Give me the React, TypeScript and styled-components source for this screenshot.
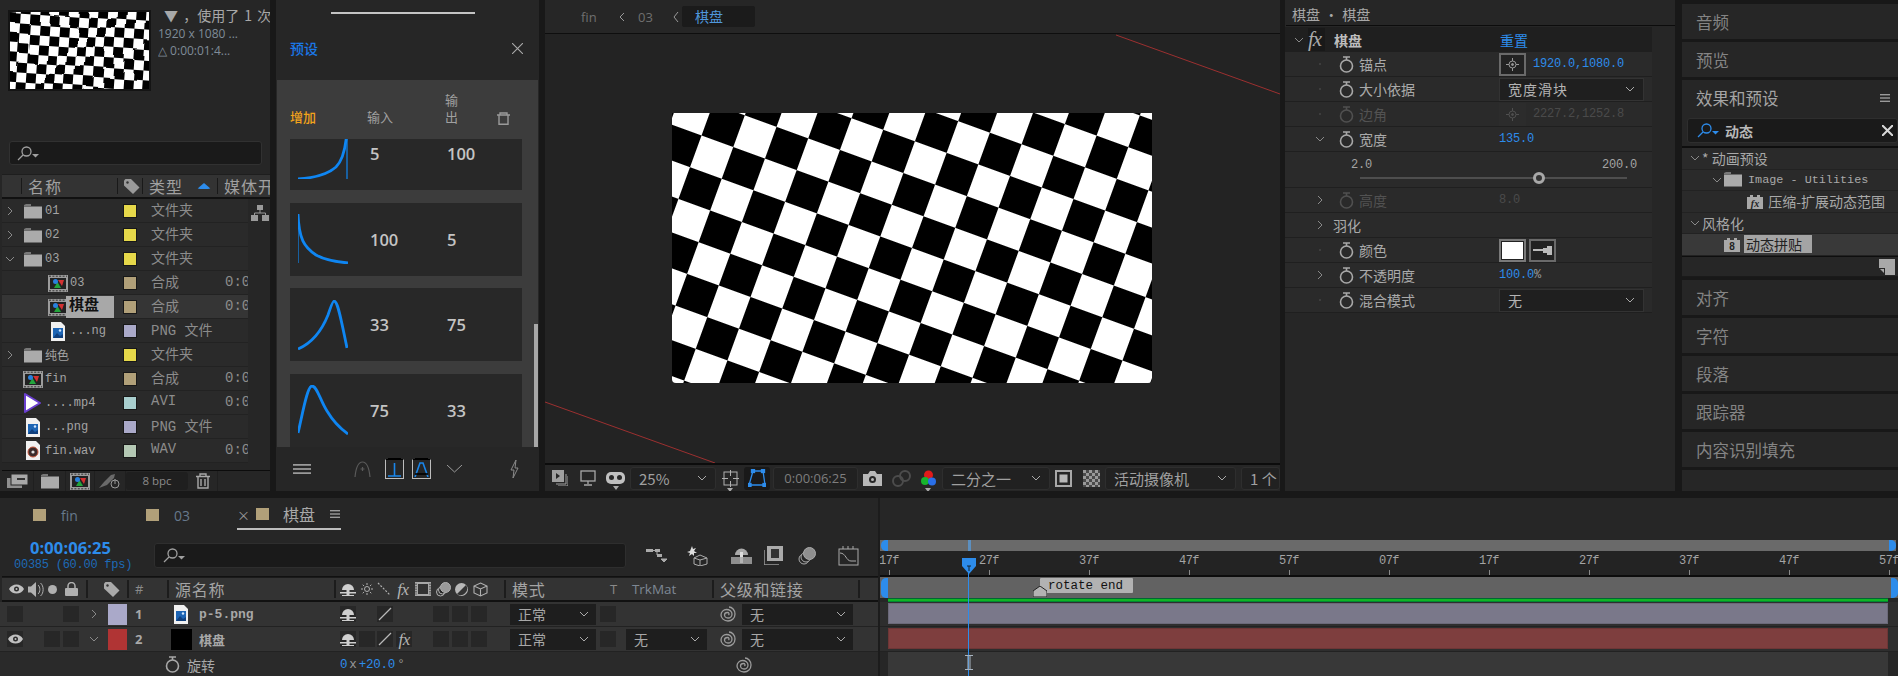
import React from 'react';
import styled, { createGlobalStyle } from 'styled-components';

const CJK = '"Noto Sans CJK SC", "Noto Sans", sans-serif';
const MONO = '"Liberation Mono", "Noto Sans CJK SC", monospace';
const BLUE = '#2d8ceb';

const Global = createGlobalStyle`
  html, body { margin: 0; padding: 0; background: #181818; overflow: hidden; }
  #root { width: 1898px; height: 676px; }
  * { box-sizing: border-box; }
`;

const Page = styled.div`
  width: 1898px; height: 676px; display: flex; flex-direction: column; gap: 7px;
  background: #181818; font-family: ${CJK}; color: #a0a0a0; overflow: hidden;
`;
const TopArea = styled.div`display: flex; height: 491px;`;
const Panel = styled.section<{ $w: number; $ml?: number }>`
  width: ${p => p.$w}px; margin-left: ${p => p.$ml ?? 0}px; flex: none; background: #262626;
  display: flex; flex-direction: column; overflow: hidden; position: relative;
`;

/* ---------- icons ---------- */
const Chevron = ({ dir = 'right', c = '#8a8a8a', s = 10 }: { dir?: 'right' | 'down' | 'left'; c?: string; s?: number }) => (
  <svg width={s} height={s} viewBox="0 0 10 10" fill="none" stroke={c} strokeWidth="1">
    {dir === 'right' && <path d="M3 1l4 4-4 4" />}
    {dir === 'left' && <path d="M7 1L3 5l4 4" />}
    {dir === 'down' && <path d="M1 3l4 4 4-4" />}
  </svg>
);
const Folder = () => (
  <svg width="18" height="15" viewBox="0 0 18 15"><path d="M0 2h7V0H2L0 1z" fill="#777" /><rect y="2.5" width="18" height="12" fill="#ababab" /></svg>
);
const CompIcon = () => (
  <svg width="20" height="17" viewBox="0 0 20 17">
    <rect width="20" height="17" fill="#9c9c9c" />
    <path d="M1 1.2h18M1 15.8h18" stroke="#333" strokeWidth="1" strokeDasharray="2 1.4" />
    <rect x="2" y="3" width="16" height="11" fill="#222" />
    <path d="M10 5h6l-2 6z" fill="#d43131" />
    <path d="M6 13l3.5-6 3.5 6z" fill="#23a53c" />
    <circle cx="7.5" cy="6.5" r="2.5" fill="#2a80dc" />
  </svg>
);
const PngIcon = () => (
  <svg width="14" height="19" viewBox="0 0 14 19">
    <path d="M0 0h10l4 4v15H0z" fill="#f0f0f0" />
    <rect x="2" y="6" width="10" height="10" fill="#1c64b4" />
    <path d="M2 16l4-5 3 3 3-2v4z" fill="#0f3f7d" />
    <circle cx="9" cy="8.5" r="1.2" fill="#cfe6ff" />
  </svg>
);
const WavIcon = () => (
  <svg width="14" height="19" viewBox="0 0 14 19">
    <path d="M0 0h10l4 4v15H0z" fill="#f0f0f0" />
    <circle cx="7" cy="11" r="5" fill="#3a2a2a" stroke="#c5563c" />
    <circle cx="7" cy="11" r="1.6" fill="#ddd" />
  </svg>
);
const AviIcon = () => (
  <svg width="17" height="20" viewBox="0 0 17 20">
    <path d="M1 1l15 9-15 9z" fill="#fff" stroke="#6a3fd0" strokeWidth="2" strokeLinejoin="round" />
  </svg>
);
const Network = () => (
  <svg width="18" height="16" viewBox="0 0 18 16" fill="#9a9a9a">
    <rect x="6" width="6" height="5" /><rect y="10" width="7" height="6" /><rect x="11" y="10" width="7" height="6" />
    <path d="M9 5v3M3.5 10V8h11v2" stroke="#9a9a9a" fill="none" />
  </svg>
);
const Tag = ({ c = '#9a9a9a' }: { c?: string }) => (
  <svg width="16" height="15" viewBox="0 0 16 15"><path d="M0 1.5L1.5 0H7l8.5 8.5L9 15 0 6.5z" fill={c} /><circle cx="3.5" cy="3.5" r="1.2" fill="#333" /></svg>
);
const SearchIcon = ({ c = '#a0a0a0' }: { c?: string }) => (
  <svg width="22" height="15" viewBox="0 0 22 15" fill="none" stroke={c} strokeWidth="1.3">
    <circle cx="9.5" cy="5.5" r="4.5" /><path d="M6 9l-5 5" /><path d="M15 8h7l-3.500 3.500z" fill={c} stroke="none" />
  </svg>
);
const Trash = ({ c = '#a0a0a0' }: { c?: string }) => (
  <svg width="14" height="16" viewBox="0 0 14 16" fill="none" stroke={c} strokeWidth="1.4">
    <path d="M0 3.500h14M4 3V1h6v2M2 4v11h10V4M5 6v7M9 6v7" />
  </svg>
);
const BinOutline = () => (
  <svg width="13" height="13" viewBox="0 0 13 13" fill="none" stroke="#9a9a9a" strokeWidth="1.400">
    <path d="M0 3h13M3 3V1h7v2M2 3v9.300h9V3" />
  </svg>
);
const Watch = ({ c = '#a8a8a8' }: { c?: string }) => (
  <svg width="15" height="17" viewBox="0 0 15 17" fill="none" stroke={c} strokeWidth="1.6">
    <circle cx="7.500" cy="10" r="6" /><path d="M4 1h7M7.500 1v3" />
  </svg>
);
const Spiral = () => (
  <svg width="16" height="16" viewBox="0 0 16 16" fill="none" stroke="#9c9c9c" strokeWidth="1.300">
    <path d="M9 1C12 1 15 4 15 8s-3 7-7 7-7-3-7-6 2.500-5.500 5.500-5.500S12 5.500 12 8s-2 4-4 4-3.500-1.500-3.500-3S6 6.500 7.500 6.500 9.500 8 8.500 9" />
  </svg>
);
const Shy = () => (
  <svg width="16" height="15" viewBox="0 0 16 15" fill="#cfcfcf">
    <path d="M2 8a6 6 0 0 1 12 0z" /><rect x="6.500" y="6" width="3" height="8" /><rect y="10" width="16" height="1.500" />
    <rect x="2" y="13" width="12" height="1" />
  </svg>
);
const Slash = () => (
  <svg width="14" height="14" viewBox="0 0 14 14" stroke="#b8b8b8" strokeWidth="1.300"><path d="M1 13L13 1" /></svg>
);
const Eye = ({ c = '#c0c0c0' }: { c?: string }) => (
  <svg width="15" height="10" viewBox="0 0 15 10"><path d="M0 5c3-6 12-6 15 0-3 6-12 6-15 0z" fill={c} /><circle cx="7.500" cy="5" r="2.500" fill="#2d2d2d" /><circle cx="7.500" cy="5" r="1" fill={c} /></svg>
);
const Speaker = () => (
  <svg width="16" height="15" viewBox="0 0 16 15" fill="#b0b0b0">
    <path d="M0 4.500h3L8 0v15l-5-4.500H0z" /><path d="M10 3c2.500 2 2.500 7 0 9M12.500 1c3.500 3 3.500 10 0 13" fill="none" stroke="#b0b0b0" />
  </svg>
);
const Lock = () => (
  <svg width="13" height="14" viewBox="0 0 13 14" fill="#b0b0b0">
    <rect y="6" width="13" height="8" rx="1" /><path d="M3 6V4a3.500 3.500 0 0 1 7 0v2" fill="none" stroke="#b0b0b0" strokeWidth="1.500" />
  </svg>
);
const Dot = () => <svg width="9" height="9" viewBox="0 0 9 9"><circle cx="4.500" cy="4.500" r="4.500" fill="#b0b0b0" /></svg>;
const Sun = () => (
  <svg width="12" height="12" viewBox="0 0 12 12" stroke="#b0b0b0" fill="none">
    <circle cx="6" cy="6" r="2.500" /><path d="M6 0v2M6 10v2M0 6h2M10 6h2M1.700 1.700l1.400 1.400M8.900 8.900l1.400 1.400M1.700 10.300l1.400-1.400M8.900 3.100l1.400-1.400" />
  </svg>
);
const Dots = () => (
  <svg width="14" height="14" viewBox="0 0 14 14" stroke="#b0b0b0" strokeWidth="1.200" strokeDasharray="2 1.500"><path d="M1 1l12 12" /></svg>
);
const Film = ({ w = 16, h = 14 }: { w?: number; h?: number }) => (
  <svg width={w} height={h} viewBox="0 0 16 14">
    <rect width="16" height="14" fill="#a8a8a8" /><rect x="3" y="2" width="10" height="10" fill="#333" />
    <path d="M1 1.500v11M15 1.500v11" stroke="#333" strokeWidth="1" strokeDasharray="1.500 1" />
  </svg>
);
const Motion = () => (
  <svg width="15" height="15" viewBox="0 0 15 15" fill="none" stroke="#b0b0b0">
    <circle cx="4.500" cy="10" r="4" /><circle cx="6.500" cy="8" r="4" fill="#262626" /><circle cx="9.500" cy="5.500" r="5" fill="#9a9a9a" />
  </svg>
);
const HalfCircle = () => (
  <svg width="13" height="13" viewBox="0 0 13 13"><circle cx="6.500" cy="6.500" r="6.500" fill="#b8b8b8" /><path d="M11 2L2 11A6.500 6.500 0 0 0 11 2z" fill="#333" /></svg>
);
const Cube = ({ s = 15 }: { s?: number }) => (
  <svg width={s} height={s} viewBox="0 0 15 15" fill="none" stroke="#b0b0b0" strokeWidth="1.100">
    <path d="M7.500 1L14 4v7l-6.500 3L1 11V4zM1 4l6.500 3L14 4M7.500 7v7" />
  </svg>
);
const Burger = ({ w = 10, h = 8, c = '#9a9a9a' }: { w?: number; h?: number; c?: string }) => (
  <svg width={w} height={h} viewBox="0 0 10 8" preserveAspectRatio="none" fill={c}>
    <rect width="10" height="1.400" /><rect y="3.300" width="10" height="1.400" /><rect y="6.600" width="10" height="1.400" />
  </svg>
);

const ThumbChecker = () => (
  <svg width="139" height="77" viewBox="0 0 139 77">
    <defs>
      <pattern id="th" width="19.6" height="19.6" patternUnits="userSpaceOnUse" patternTransform="rotate(4)">
        <rect width="19.6" height="19.6" fill="#fff" />
        <rect width="9.800" height="9.800" fill="#000" />
        <rect x="9.800" y="9.800" width="9.800" height="9.800" fill="#000" />
      </pattern>
      <filter id="warp" x="-10%" y="-10%" width="120%" height="120%">
        <feTurbulence type="fractalNoise" baseFrequency="0.018" numOctaves="1" seed="4" />
        <feDisplacementMap in="SourceGraphic" scale="10" />
      </filter>
    </defs>
    <rect x="-10" y="-10" width="160" height="100" fill="url(#th)" filter="url(#warp)" />
  </svg>
);

/* ---------- project panel ---------- */
const InfoRow = styled.div`height: 134px; display: flex; padding: 10px 0 0 8px; gap: 7px; flex: none;`;
const Thumb = styled.div`width: 143px; height: 81px; border: 2px solid #141414; background: #fff; overflow: hidden; flex: none; line-height: 0;`;
const InfoText = styled.div`display: flex; flex-direction: column; white-space: nowrap; overflow: hidden; margin-top: -4px;`;
const InfoTitle = styled.div`font-size: 14px; height: 19px; line-height: 19px; color: #a8a8a8; margin-left: 6px; word-spacing: 2px;`;
const InfoLine = styled.div`font: 12px/17px "Open Sans", sans-serif; color: #7f8c98;`;
const SearchBox = styled.div`
  height: 24px; margin: 7px 8px 0 9px; background: #1a1a1a; border: 1px solid #313131; border-radius: 3px;
  display: flex; align-items: center; padding-left: 7px; flex: none;
`;
const ListHeader = styled.div`
  height: 25px; margin: 9px 0 0 2px; display: flex; flex: none; background: #333; border-top: 1px solid #1e1e1e; border-bottom: 2px solid #111; padding-left: 19px;
`;
const HeadCol = styled.div<{ $w: number }>`
  width: ${p => p.$w}px; flex: none; display: flex; align-items: center; gap: 14px; padding-left: 6px; white-space: nowrap;
  border-left: 1px solid #191919; margin: 3px 0; font-size: 16px; letter-spacing: 1px; color: #a0a0a0;
`;
const SortArrow = styled.span`width: 0; height: 0; border: 7px solid transparent; border-top: 0; border-bottom: 6px solid #2d8ceb; border-radius: 3px;`;
const ListBody = styled.div`display: flex; flex: 1; padding-left: 2px; overflow: hidden;`;
const Rows = styled.div`width: 246px; flex: none;`;
const SideCol = styled.div`flex: 1; padding: 3px 0 0 3px;`;
const Row = styled.div<{ $on?: boolean }>`
  height: 24px; display: grid; grid-template-columns: 121px 28px 74px 1fr; align-items: center; white-space: nowrap;
  background: ${p => (p.$on ? '#353535' : '#2a2a2a')}; border-bottom: 1px solid #222;
`;
const NameCell = styled.div<{ $indent: number }>`display: flex; align-items: center; padding-left: ${p => p.$indent}px; height: 100%; overflow: hidden;`;
const TwistSlot = styled.span`width: 19px; flex: none; display: flex; padding-left: 3px;`;
const IconSlot = styled.span`width: 23px; flex: none; display: flex; justify-content: center;`;
const FileName = styled.span<{ $on?: boolean }>`
  font-family: ${MONO}; margin-left: ${p => (p.$on ? -3 : 1)}px; color: ${p => (p.$on ? '#111' : '#a4a4a4')}; font-weight: ${p => (p.$on ? 700 : 400)};
  background: ${p => (p.$on ? '#a8a8a8' : 'none')}; padding: ${p => (p.$on ? '0 15px 0 3px' : '0')}; font-size: ${p => (p.$on ? 15 : 12)}px; line-height: ${p => (p.$on ? '22px' : 'normal')};
`;
const Swatch = styled.span<{ $c: string }>`display: block; width: 14px; height: 14px; background: ${p => p.$c}; border: 1px solid #181818;`;
const TypeCell = styled.span`font-size: 14px; color: #8c8c8c; font-family: ${MONO}; padding-bottom: 4px;`;
const DurCell = styled.span`font-family: ${MONO}; font-size: 14px; color: #8c8c8c; overflow: hidden; padding-bottom: 2px;`;
const Foot = styled.div`height: 21px; border-top: 1px solid #0c0c0c; display: flex; align-items: center; margin-left: 2px; flex: none;`;
const FootSlot = styled.span<{ $w: number }>`width: ${p => p.$w}px; flex: none; display: flex; justify-content: center; align-items: center; border-right: 1px solid #1f1f1f; height: 100%;`;
const BpcBox = styled.span`width: 62px; height: 18px; background: #1f1f1f; border-radius: 3px; font: 11.500px/18px "Open Sans", sans-serif; color: #8a8a8a; text-align: center; flex: none;`;

type PR = { ind: number; tw?: 'right' | 'down'; icon: React.ReactNode; name: string; tag: string; type: string; dur?: boolean; on?: boolean };
const TAN = '#b1a079', YEL = '#e6d84a', LAV = '#aaa9c9';
const projectRows: PR[] = [
  { ind: 0, tw: 'right', icon: <Folder />, name: '01', tag: YEL, type: '文件夹' },
  { ind: 0, tw: 'right', icon: <Folder />, name: '02', tag: YEL, type: '文件夹' },
  { ind: 0, tw: 'down', icon: <Folder />, name: '03', tag: YEL, type: '文件夹' },
  { ind: 25, icon: <CompIcon />, name: '03', tag: TAN, type: '合成', dur: true },
  { ind: 25, icon: <CompIcon />, name: '棋盘', tag: TAN, type: '合成', dur: true, on: true },
  { ind: 25, icon: <PngIcon />, name: '...ng', tag: LAV, type: 'PNG 文件' },
  { ind: 0, tw: 'right', icon: <Folder />, name: '纯色', tag: YEL, type: '文件夹' },
  { ind: 0, icon: <CompIcon />, name: 'fin', tag: TAN, type: '合成', dur: true },
  { ind: 0, icon: <AviIcon />, name: '....mp4', tag: '#a9cfcf', type: 'AVI', dur: true },
  { ind: 0, icon: <PngIcon />, name: '...png', tag: LAV, type: 'PNG 文件' },
  { ind: 0, icon: <WavIcon />, name: 'fin.wav', tag: '#b4c8b4', type: 'WAV', dur: true },
];

const Project = () => (
  <Panel $w={270}>
    <InfoRow>
      <Thumb><ThumbChecker /></Thumb>
      <InfoText>
        <InfoTitle>▼ ，使用了 1 次</InfoTitle>
        <InfoLine>1920 x 1080 ...</InfoLine>
        <InfoLine>△ 0:00:01:4...</InfoLine>
      </InfoText>
    </InfoRow>
    <SearchBox><SearchIcon /></SearchBox>
    <ListHeader>
      <HeadCol $w={96}>名称</HeadCol>
      <HeadCol $w={25}><Tag /></HeadCol>
      <HeadCol $w={75}>类型<SortArrow /></HeadCol>
      <HeadCol $w={50}>媒体开</HeadCol>
    </ListHeader>
    <ListBody>
      <Rows>
        {projectRows.map((r, i) => (
          <Row key={i} $on={r.on}>
            <NameCell $indent={r.ind}>
              <TwistSlot>{r.tw && <Chevron dir={r.tw} />}</TwistSlot>
              <IconSlot>{r.icon}</IconSlot>
              <FileName $on={r.on}>{r.name}</FileName>
            </NameCell>
            <Swatch $c={r.tag} />
            <TypeCell>{r.type}</TypeCell>
            {r.dur ? <DurCell>0:00</DurCell> : <span />}
          </Row>
        ))}
      </Rows>
      <SideCol><Network /></SideCol>
    </ListBody>
    <Foot>
      <FootSlot $w={32}><svg width="21" height="14" viewBox="0 0 21 14"><rect x="0" y="4" width="15" height="10" fill="#8f8f8f" /><rect x="4" y="0" width="17" height="11" fill="#a8a8a8" stroke="#262626" /><rect x="10" y="4" width="8" height="2" fill="#333" /></svg></FootSlot>
      <FootSlot $w={32}><Folder /></FootSlot>
      <FootSlot $w={29}><CompIcon /></FootSlot>
      <FootSlot $w={31}><svg width="22" height="15" viewBox="0 0 22 15" fill="#6a6a6a"><path d="M0 14l5-6 7-7 4-1-1 4-7 7z" /><circle cx="16" cy="10" r="4" fill="none" stroke="#9a9a9a" /><path d="M16 5v5" stroke="#9a9a9a" /></svg></FootSlot>
      <BpcBox>8 bpc</BpcBox>
      <FootSlot $w={30}><Trash c="#a8a8a8" /></FootSlot>
    </Foot>
  </Panel>
);

/* ---------- preset panel ---------- */
const TopBar = styled.div`height: 80px; flex: none; padding-top: 12px; display: flex; flex-direction: column; position: relative;`;
const TopRule = styled.div`width: 144px; height: 2px; background: #c4c4c4; margin-left: 55px;`;
const TitleLine = styled.div`display: flex; justify-content: space-between; align-items: center; margin: 24px 16px 0 14px;`;
const PresetTitle = styled.span`color: #1a78e8; font-size: 14px; font-weight: 500;`;
const GreySection = styled.div`height: 367px; margin: 0 1px; background: #3c3c3c; display: flex; flex-direction: column; position: relative; flex: none;`;
const CurveHead = styled.div`height: 59px; display: grid; grid-template-columns: 77px 78px 52px auto; padding: 0 0 14px 13px; align-items: end; font-size: 13px; color: #a0a0a0; flex: none; line-height: 17px;`;
const Orange = styled.span`color: #f2a31b; font-weight: 500;`;
const Narrow = styled.span`width: 14px; display: block;`;
const CurveClip = styled.div`flex: 1; overflow: hidden; padding: 0 16px 0 13px;`;
const CurveList = styled.div`margin-top: -22px; display: flex; flex-direction: column; gap: 12.500px;`;
const CurveRow = styled.div`
  height: 73px; flex: none; background: #282828; display: grid; grid-template-columns: 72px 77px 1fr; align-items: center; padding-left: 8px;
  font: 600 16.500px "Open Sans", sans-serif; color: #c4c4c4;
`;
const ScrollThumb = styled.div`position: absolute; right: 0; bottom: 0; width: 4px; height: 123px; background: #a8a8a8;`;
const PresetFoot = styled.div`flex: 1; display: flex; align-items: center; padding: 0 0 0 17px;`;
const ModeBtn = styled.span<{ $ml: number }>`
  width: 19px; height: 20px; margin-left: ${p => p.$ml}px; border: 1px solid #bdbdbd; border-top: 1px solid #000; box-shadow: 0 -4px 0 -3px #000;
  display: flex; align-items: center; justify-content: center; flex: none;
`;
const FootIcon = styled.span<{ $ml: number }>`margin-left: ${p => p.$ml}px; display: flex; flex: none;`;

const curves = [
  { a: '5', b: '100', d: 'M0 50C15 49 29 46 38 38 44 32 48 20 49 0', thin: 'M49 0V50' },
  { a: '100', b: '5', d: 'M0 0C1 25 6 33 18 41 27 46 40 48 50 49', thin: 'M0 0V49' },
  { a: '33', b: '75', d: 'M0 49C14 43 24 30 30 15 33 6 35 1 36 1 39 1 41 8 49 48' },
  { a: '75', b: '33', d: 'M0 48C4 32 9 1 14 1 19 1 22 15 29 26 35 36 43 44 50 49' },
];

const Preset = () => (
  <Panel $w={263} $ml={6}>
    <TopBar>
      <TopRule />
      <TitleLine>
        <PresetTitle>预设</PresetTitle>
        <svg width="11" height="11" viewBox="0 0 11 11" stroke="#aaa" strokeWidth="1.100"><path d="M0 0l11 11M11 0L0 11" /></svg>
      </TitleLine>
    </TopBar>
    <GreySection>
      <CurveHead>
        <Orange>增加</Orange>
        <span>输入</span>
        <Narrow>输出</Narrow>
        <BinOutline />
      </CurveHead>
      <CurveClip>
        <CurveList>
          {curves.map((c, i) => (
            <CurveRow key={i}>
              <svg width="50" height="50" viewBox="0 0 50 50" fill="none" stroke="#0f86f2" strokeWidth="2.800">
                <path d={c.d} />
                {c.thin && <path d={c.thin} strokeWidth="1.200" />}
              </svg>
              <span>{c.a}</span>
              <span>{c.b}</span>
            </CurveRow>
          ))}
        </CurveList>
      </CurveClip>
      <ScrollThumb />
    </GreySection>
    <PresetFoot>
      <Burger w={18} h={10} />
      <FootIcon $ml={43}><svg width="17" height="16" viewBox="0 0 17 16" fill="none" stroke="#5a5a5a" strokeWidth="1.200"><path d="M1 16C2 6 5 1 8.500 1S15 6 16 16M8.500 6v4M6.500 8h4" /></svg></FootIcon>
      <ModeBtn $ml={14}><svg width="15" height="15" viewBox="0 0 15 15" stroke="#1a86ea" strokeWidth="1.600" fill="none"><path d="M7.500 1v13M1 14h13" /></svg></ModeBtn>
      <ModeBtn $ml={8}><svg width="15" height="15" viewBox="0 0 15 15" stroke="#1a86ea" strokeWidth="1.600" fill="none"><path d="M1 15L6 1h3l5 14" /><path d="M1 12h13" stroke="#000" /></svg></ModeBtn>
      <FootIcon $ml={16}><svg width="15" height="8" viewBox="0 0 15 8" stroke="#9a9a9a" fill="none"><path d="M0 0l7.500 7L15 0" /></svg></FootIcon>
      <FootIcon $ml={48}><svg width="9" height="18" viewBox="0 0 9 18" stroke="#8a8a8a" fill="none"><path d="M6 0L1 10h3L3 18l5-10H5z" /></svg></FootIcon>
    </PresetFoot>
  </Panel>
);

/* ---------- viewer ---------- */
const Crumbs = styled.div`height: 34px; flex: none; display: flex; align-items: center; padding-left: 36px; border-bottom: 1px solid #0e0e0e; font-size: 13px; color: #6f6f6f;`;
const CrumbText = styled.span<{ $w: number }>`width: ${p => p.$w}px; flex: none; font-family: "Open Sans", sans-serif;`;
const CrumbSep = styled.span<{ $w: number }>`width: ${p => p.$w}px; flex: none; display: flex;`;
const CrumbTab = styled.span`width: 73px; height: 21px; background: #1b1b1b; color: #4f97dc; padding-left: 13px; font-size: 14px; line-height: 21px; border-radius: 2px; flex: none;`;
const Stage = styled.div`flex: 1; position: relative; display: flex; align-items: center; justify-content: center; background: #232323; padding: 0 1px 1px 0;`;
const Guides = styled.svg`position: absolute; inset: 0;`;
const Frame = styled.div`width: 480px; height: 270px; position: relative; border-radius: 0 0 4px 4px; overflow: hidden; line-height: 0;`;
const Toolbar = styled.div`height: 28px; flex: none; border-top: 2px solid #0c0c0c; display: flex; align-items: center; overflow: hidden;`;
const Slot = styled.span<{ $w: number }>`width: ${p => p.$w}px; flex: none; display: flex; justify-content: center; align-items: center; position: relative;`;
const Drop = styled.span<{ $w: number; $ml?: number }>`
  width: ${p => p.$w}px; margin-left: ${p => p.$ml ?? 0}px; height: 23px; flex: none; background: #212121; border: 1px solid #2e2e2e; border-radius: 3px;
  display: flex; align-items: center; justify-content: space-between; padding: 0 8px; font-size: 15px; color: #a0a0a0; white-space: nowrap;
`;
const ActiveBtn = styled.span`width: 26px; height: 23px; flex: none; background: #191919; border-radius: 3px; display: flex; align-items: center; justify-content: center;`;
const TimeBox = styled.span`width: 85px; height: 23px; margin-left: 3px; flex: none; background: #212121; border: 1px solid #2e2e2e; border-radius: 3px; text-align: center; font: 13px/21px "Open Sans", sans-serif; color: #7e7e7e;`;
const Mini = styled.span`position: absolute; bottom: -5px; left: 50%; margin-left: -3px; width: 0; height: 0; border: 3px solid transparent; border-bottom: 0; border-top: 4px solid #aaa;`;

const BigChecker = () => (
  <svg width="480" height="270" viewBox="0 0 480 270">
    <defs>
      <pattern id="chk" x="240" y="135" width="67.5" height="67.5" patternUnits="userSpaceOnUse" patternTransform="rotate(20 240 135)">
        <rect width="67.5" height="67.5" fill="#000" />
        <rect width="33.75" height="33.75" fill="#fff" />
        <rect x="33.75" y="33.75" width="33.75" height="33.75" fill="#fff" />
      </pattern>
    </defs>
    <rect width="480" height="270" fill="url(#chk)" />
  </svg>
);

const Viewer = () => (
  <Panel $w={735} $ml={6}>
    <Crumbs>
      <CrumbText $w={36}>fin</CrumbText>
      <CrumbSep $w={21}><Chevron dir="left" c="#999" /></CrumbSep>
      <CrumbText $w={35}>03</CrumbText>
      <CrumbSep $w={9}><svg width="6" height="10" viewBox="0 0 6 10" fill="none" stroke="#999"><path d="M5 0L1 5l4 5" /></svg></CrumbSep>
      <CrumbTab>棋盘</CrumbTab>
    </Crumbs>
    <Stage>
      <Guides width="735" height="429" viewBox="0 0 735 429" fill="none" stroke="#9c3030">
        <path d="M571 1L735 60M0 368L170 429" />
      </Guides>
      <Frame><BigChecker /></Frame>
    </Stage>
    <Toolbar>
      <Slot $w={29}><svg width="16" height="16" viewBox="0 0 16 16" fill="none" stroke="#a0a0a0"><rect x="0.500" y="0.500" width="11" height="11" fill="#a0a0a0" /><path d="M14 4v10H4M16 6v10H6" /><path d="M4 3l4 3-4 3z" fill="#262626" stroke="none" /></svg></Slot>
      <Slot $w={28}><svg width="16" height="16" viewBox="0 0 16 16" fill="none" stroke="#a8a8a8" strokeWidth="1.300"><rect x="1" y="1" width="14" height="10" /><path d="M8 11v3M4 15h8" /></svg></Slot>
      <Slot $w={27}><svg width="19" height="13" viewBox="0 0 19 13" fill="#c0c0c0"><rect width="19" height="12" rx="5" /><circle cx="5.500" cy="5.500" r="2.500" fill="#262626" /><circle cx="13.500" cy="5.500" r="2.500" fill="#262626" /></svg><Mini /></Slot>
      <Drop $w={86} $ml={1}><span>25%</span><Chevron dir="down" c="#aaa" /></Drop>
      <Slot $w={28}><svg width="17" height="17" viewBox="0 0 17 17" fill="none" stroke="#b0b0b0"><rect x="2" y="2" width="13" height="13" /><path d="M8.500 0v6M8.500 11v6M0 8.500h6M11 8.500h6" /></svg><Mini /></Slot>
      <ActiveBtn><svg width="18" height="18" viewBox="0 0 18 18" fill="none" stroke="#2d8ceb" strokeWidth="1.300"><path d="M5 2h10l2 14H1z" /><rect x="3.500" y="0.500" width="3" height="3" fill="#2d8ceb" /><rect x="13.500" y="0.500" width="3" height="3" fill="#2d8ceb" /><rect x="0" y="14.500" width="3" height="3" fill="#2d8ceb" /><rect x="15" y="14.500" width="3" height="3" fill="#2d8ceb" /></svg></ActiveBtn>
      <TimeBox>0:00:06:25</TimeBox>
      <Slot $w={29}><svg width="19" height="15" viewBox="0 0 19 15"><path d="M0 3h5l2-3h5l2 3h5v12H0z" fill="#b8b8b8" /><circle cx="9.500" cy="8.500" r="3.500" fill="#262626" /><circle cx="9.500" cy="8.500" r="1.500" fill="#b8b8b8" /></svg></Slot>
      <Slot $w={28}><svg width="19" height="17" viewBox="0 0 19 17" fill="none" stroke="#4c4c4c" strokeWidth="2"><circle cx="6" cy="11" r="5" /><circle cx="13" cy="6" r="5" /></svg></Slot>
      <Slot $w={26}><svg width="15" height="17" viewBox="0 0 15 17"><circle cx="7.500" cy="5" r="4.500" fill="#e01a1a" /><circle cx="4" cy="11" r="4" fill="#17b52d" /><circle cx="11" cy="11.500" r="4" fill="#2a6fe8" /></svg><Mini /></Slot>
      <Drop $w={108} $ml={1}><span>二分之一</span><Chevron dir="down" c="#aaa" /></Drop>
      <Slot $w={27}><svg width="17" height="17" viewBox="0 0 17 17"><rect x="1" y="1" width="15" height="15" fill="none" stroke="#a8a8a8" strokeWidth="2" /><rect x="4.500" y="4.500" width="8" height="8" fill="#b8b8b8" /></svg></Slot>
      <Slot $w={28}><svg width="17" height="17" viewBox="0 0 17 17"><defs><pattern id="cb" width="6" height="6" patternUnits="userSpaceOnUse"><rect width="6" height="6" fill="#4a4a4a" /><rect width="3" height="3" fill="#999" /><rect x="3" y="3" width="3" height="3" fill="#999" /></pattern></defs><rect width="17" height="17" fill="url(#cb)" /></svg></Slot>
      <Drop $w={131}><span>活动摄像机</span><Chevron dir="down" c="#aaa" /></Drop>
      <Drop $w={39} $ml={5}><span>1 个</span></Drop>
    </Toolbar>
  </Panel>
);

/* ---------- effect controls ---------- */
const FxHeader = styled.div`height: 26px; flex: none; display: flex; align-items: center; padding: 2px 0 0 6px; border-bottom: 1px solid #0c0c0c; font-size: 14px; color: #a8a8a8; margin-left: 1px; word-spacing: 1px;`;
const FxBody = styled.div`width: 367px; flex: none; background: #2a2a2a; margin-top: 1px;`;
const FxTop = styled.div`height: 25px; background: #1f1f1f; display: grid; grid-template-columns: 14px 26px 166px 1fr; padding-left: 9px; align-items: center;`;
const FxMark = styled.span`font: italic 21px "Liberation Serif", serif; color: #aaa; background: #191919; width: 17px; line-height: 23px; letter-spacing: -1px;`;
const FxSmall = styled.span`font: italic 17px/15px "Liberation Serif", serif; color: #b4b4b4; width: 15px; flex: none; letter-spacing: -.5px; text-align: center; display: block;`;
const FxName = styled.span`font-size: 14px; font-weight: 700; color: #bdbdbd;`;
const ResetLink = styled.span`font-size: 14px; color: ${BLUE};`;
const PropRow = styled.div<{ $h?: number }>`
  height: ${p => p.$h ?? 25}px; display: grid; grid-template-columns: 20px 29px 140px 1fr; padding-left: 25px; align-items: center; border-bottom: 1px solid #1f1f1f;
`;
const Twist = styled.span`display: flex; justify-content: center;`;
const Tick = styled.span`width: 2px; height: 2px; background: #3d3d3d; margin: 0 auto;`;
const WatchCell = styled.span`padding-left: 9px; display: flex;`;
const PropLabel = styled.span<{ $dim?: boolean }>`font-size: 14px; color: ${p => (p.$dim ? '#525252' : '#aaa')};`;
const GroupLabel = styled.span`grid-column: 2 / 4; padding-left: 3px; font-size: 14px; color: #aaa;`;
const PropVal = styled.div`display: flex; align-items: center; gap: 7px;`;
const Num = styled.span<{ $dim?: boolean }>`font: 12px ${MONO}; letter-spacing: -0.2px; color: ${p => (p.$dim ? '#4a4a4a' : BLUE)};`;
const Unit = styled.span`color: #9a9a9a;`;
const TargetBtn = styled.span<{ $off?: boolean }>`
  width: 27px; height: 23px; border: 2px solid ${p => (p.$off ? 'transparent' : '#6a6a6a')}; background: ${p => (p.$off ? '#2c2c2c' : '#222')}; display: flex; align-items: center; justify-content: center; flex: none;
`;
const PropSelect = styled.span`
  width: 145px; height: 23px; background: #1f1f1f; border: 1px solid #333; display: flex; align-items: center; justify-content: space-between; padding: 0 8px; font-size: 14px; color: #b4b4b4; letter-spacing: 1px;
`;
const SliderPanel = styled.div`height: 36px; padding: 5px 15px 0 66px; border-bottom: 1px solid #1f1f1f;`;
const SliderLabels = styled.div`display: flex; justify-content: space-between; font: 12px/16px ${MONO}; color: #a4a4a4; letter-spacing: -0.200px;`;
const SliderTrack = styled.div`height: 2px; margin: 4px 10px 0 9px; background: #4e4e4e; position: relative;`;
const SliderKnob = styled.span`position: absolute; left: 173px; top: -5px; width: 12px; height: 12px; border-radius: 50%; background: #333; border: 3px solid #a8a8a8;`;
const ColorBtn = styled.span`width: 27px; height: 23px; border: 2px solid #7a7a7a; background: #fff; box-shadow: inset 0 0 0 1px #222; flex: none;`;
const DropperBtn = styled.span`width: 27px; height: 23px; border: 2px solid #6a6a6a; margin-left: -4px; background: #222; display: flex; align-items: center; justify-content: center; flex: none;`;

const Target = ({ c = '#9a9a9a' }: { c?: string }) => (
  <svg width="13" height="13" viewBox="0 0 13 13" fill="none" stroke={c}><circle cx="6.500" cy="6.500" r="3.500" /><circle cx="6.500" cy="6.500" r="1" fill={c} /><path d="M6.500 0v3M6.500 10v3M0 6.500h3M10 6.500h3" /></svg>
);

const Effect = () => (
  <Panel $w={390} $ml={5}>
    <FxHeader>棋盘 ・ 棋盘</FxHeader>
    <FxBody>
      <FxTop><Chevron dir="down" /><FxMark>fx</FxMark><FxName>棋盘</FxName><ResetLink>重置</ResetLink></FxTop>
      <PropRow><Tick /><WatchCell><Watch /></WatchCell><PropLabel>锚点</PropLabel>
        <PropVal><TargetBtn><Target /></TargetBtn><Num>1920.0,1080.0</Num></PropVal></PropRow>
      <PropRow><Tick /><WatchCell><Watch /></WatchCell><PropLabel>大小依据</PropLabel>
        <PropSelect>宽度滑块<Chevron dir="down" c="#aaa" /></PropSelect></PropRow>
      <PropRow><Tick /><WatchCell><Watch c="#505050" /></WatchCell><PropLabel $dim>边角</PropLabel>
        <PropVal><TargetBtn $off><Target c="#505050" /></TargetBtn><Num $dim>2227.2,1252.8</Num></PropVal></PropRow>
      <PropRow><Twist><Chevron dir="down" /></Twist><WatchCell><Watch /></WatchCell><PropLabel>宽度</PropLabel><Num>135.0</Num></PropRow>
      <SliderPanel>
        <SliderLabels><span>2.0</span><span>200.0</span></SliderLabels>
        <SliderTrack><SliderKnob /></SliderTrack>
      </SliderPanel>
      <PropRow><Twist><Chevron /></Twist><WatchCell><Watch c="#505050" /></WatchCell><PropLabel $dim>高度</PropLabel><Num $dim>8.0</Num></PropRow>
      <PropRow><Twist><Chevron /></Twist><GroupLabel>羽化</GroupLabel></PropRow>
      <PropRow><Tick /><WatchCell><Watch /></WatchCell><PropLabel>颜色</PropLabel>
        <PropVal><ColorBtn /><DropperBtn><svg width="19" height="9" viewBox="0 0 19 9"><path d="M0 4h10" stroke="#bbb" strokeWidth="2" /><rect x="10" y="2" width="4" height="5" fill="#bbb" /><rect x="14" y="0" width="5" height="9" fill="#bbb" /></svg></DropperBtn></PropVal></PropRow>
      <PropRow><Twist><Chevron /></Twist><WatchCell><Watch /></WatchCell><PropLabel>不透明度</PropLabel><Num>100.0<Unit>%</Unit></Num></PropRow>
      <PropRow><Tick /><WatchCell><Watch /></WatchCell><PropLabel>混合模式</PropLabel>
        <PropSelect>无<Chevron dir="down" c="#aaa" /></PropSelect></PropRow>
    </FxBody>
  </Panel>
);

/* ---------- right column ---------- */
const RightCol = styled.div`width: 216px; margin-left: 7px; flex: none; display: flex; flex-direction: column; gap: 3px;`;
const Dock = styled.div<{ $h: number; $mt?: number }>`
  height: ${p => p.$h}px; margin-top: ${p => p.$mt ?? 0}px; flex: none; background: #262626; display: flex; align-items: center; padding-left: 14px; font-size: 16.500px; color: #848484; letter-spacing: 0; white-space: nowrap;
`;
const EffectsBox = styled.div`height: 197px; flex: none; background: #262626; display: flex; flex-direction: column;`;
const EffectsHead = styled.div`height: 38px; flex: none; display: flex; align-items: center; justify-content: space-between; padding: 0 8px 2px 14px; font-size: 16.500px; color: #a4a4a4;`;
const EffectSearch = styled.div`height: 25px; margin-left: 5px; flex: none; background: #1a1a1a; border: 1px solid #2e2e2e; border-radius: 3px; display: flex; align-items: center; padding: 0 4px 0 9px; gap: 6px; font-size: 14px; font-weight: 700; color: #b8b8b8;`;
const Spacer = styled.span`flex: 1;`;
const TreeWrap = styled.div`margin-top: 3px; border-top: 2px solid #0e0e0e; border-bottom: 1px solid #0e0e0e; flex: none;`;
const TreeRow = styled.div<{ $on?: boolean; $ind: number }>`
  height: 21.500px; display: flex; align-items: center; gap: 2px; padding-left: ${p => p.$ind}px; white-space: nowrap;
  font-size: 14px; color: #a8a8a8; background: ${p => (p.$on ? '#393939' : '#2a2a2a')}; border-bottom: 1px solid #222;
`;
const TreeMono = styled.span`font: 11.800px ${MONO}; margin-left: 4px; color: #a8a8a8;`;
const Picked = styled.span`background: #a4a4a4; color: #222; padding: 0 10px 0 2px; line-height: 18px; margin-left: 2px;`;
const Grip = styled.div`flex: 1; display: flex; justify-content: flex-end; align-items: flex-start; padding: 2px 3px 0 0; border-bottom: 1px solid #1a1a1a;`;
const PluginBlock = ({ label, serif }: { label: string; serif?: boolean }) => (
  <svg width="16" height="15" viewBox="0 0 16 15">
    <path d="M0 3h3V1h3v2h4V1h3v2h3v12H0z" fill="#a8a8a8" />
    <text x="8" y="13" textAnchor="middle" fontSize="10" fontWeight="700" fontStyle={serif ? 'italic' : 'normal'} fontFamily={serif ? '"Liberation Serif", serif' : '"Liberation Sans", sans-serif'} fill="#222">{label}</text>
  </svg>
);

const Right = () => (
  <RightCol>
    <Dock $h={35} $mt={4}>音频</Dock>
    <Dock $h={35}>预览</Dock>
    <EffectsBox>
      <EffectsHead>效果和预设<Burger /></EffectsHead>
      <EffectSearch>
        <SearchIcon c="#2d8ceb" />动态<Spacer />
        <svg width="11" height="11" viewBox="0 0 11 11" stroke="#d8d8d8" strokeWidth="2"><path d="M0 0l11 11M11 0L0 11" /></svg>
      </EffectSearch>
      <TreeWrap>
        <TreeRow $ind={8}><Chevron dir="down" />* 动画预设</TreeRow>
        <TreeRow $ind={30}><Chevron dir="down" /><Folder /><TreeMono>Image - Utilities</TreeMono></TreeRow>
        <TreeRow $ind={65}><PluginBlock label="fx" serif /><span>&nbsp;压缩-扩展动态范围</span></TreeRow>
        <TreeRow $ind={8}><Chevron dir="down" />风格化</TreeRow>
        <TreeRow $ind={42} $on><PluginBlock label="8" /><Picked>动态拼贴</Picked></TreeRow>
      </TreeWrap>
      <Grip><svg width="16" height="16" viewBox="0 0 16 16"><path d="M0 0h16v16H6V9H0z" fill="#a8a8a8" /><path d="M1 10h4v4z" fill="#a8a8a8" /></svg></Grip>
    </EffectsBox>
    <Dock $h={35}>对齐</Dock>
    <Dock $h={35}>字符</Dock>
    <Dock $h={35}>段落</Dock>
    <Dock $h={35}>跟踪器</Dock>
    <Dock $h={35}>内容识别填充</Dock>
    <Dock $h={21} />
  </RightCol>
);

/* ---------- timeline ---------- */
const Timeline = styled.section`height: 178px; background: #262626; display: flex; flex: none;`;
const LeftPane = styled.div`width: 880px; flex: none; display: flex; flex-direction: column; border-right: 2px solid #1c1c1c;`;
const Tabs = styled.div`height: 36px; flex: none; display: flex; align-items: flex-start; padding-top: 10px; font-size: 14px;`;
const TabSwatch = styled.span`width: 13px; height: 12px; background: #b1a079; flex: none;`;
const TabItem = styled.div<{ $w: number }>`width: ${p => p.$w}px; padding-left: 33px; display: flex; align-items: center; gap: 15px; height: 14px; flex: none; color: #66798c; font-family: "Open Sans", sans-serif;`;
const TabItemNext = styled(TabItem)`padding-left: 33px;`;
const ActiveTab = styled.div`width: 104px; border-bottom: 2px solid #bdbdbd; display: flex; align-items: center; font-size: 16px; color: #a8a8a8; height: 30px; margin-top: -8px; flex: none;`;
const TabClose = styled.span`width: 19px; color: #9a9a9a; font-size: 13px; flex: none;`;
const TabName = styled.span`margin: 0 15px 0 14px;`;
const Controls = styled.div`height: 43px; flex: none; display: flex; align-items: center;`;
const TimeCol = styled.div`width: 154px; flex: none; padding-left: 14px; display: flex; flex-direction: column; align-items: flex-start;`;
const BigTime = styled.span`font: 700 16.500px/20px "Open Sans", sans-serif; color: ${BLUE}; margin-left: 16px; letter-spacing: 0.100px;`;
const Fps = styled.span`font: 12px/15px ${MONO}; color: #1d6ab6; letter-spacing: -0.250px; white-space: nowrap;`;
const LayerSearch = styled.div`width: 472px; height: 25px; flex: none; background: #1a1a1a; border: 1px solid #2e2e2e; border-radius: 3px; display: flex; align-items: center; padding-left: 8px;`;
const CtlIcon = styled.span<{ $ml: number }>`margin-left: ${p => p.$ml}px; flex: none; display: flex;`;
const LayerHead = styled.div`height: 25px; flex: none; display: flex; background: #333; border-top: 1px solid #1a1a1a; border-bottom: 2px solid #111; margin-left: 2px; box-shadow: 0 -1px 0 #111;`;
const LHCell = styled.div<{ $w: number; $sep?: boolean; $gap?: number; $pl?: number }>`
  width: ${p => p.$w}px; flex: none; display: flex; align-items: center; gap: ${p => p.$gap ?? 0}px; padding-left: ${p => p.$pl ?? 6}px;
  white-space: nowrap; font-size: 16px; letter-spacing: .7px; color: #a4a4a4; margin: 2px 0;
  border-left: ${p => (p.$sep === false ? '0' : '2px solid #1c1c1c')};
`;
const HashMark = styled.span`font: 13px "Open Sans", sans-serif; color: #8a8a8a;`;
const TrkLabel = styled.span`font: 13.500px "Open Sans", sans-serif; letter-spacing: 0; color: #7e8894; margin-left: 14px;`;
const LayerRow = styled.div<{ $bg?: string; $h?: number }>`
  height: ${p => p.$h ?? 25}px; flex: none; padding-left: 7px; background: ${p => p.$bg ?? '#333'}; border-bottom: 1px solid #222;
  display: grid; grid-template-columns: 73px 28px 19px 38px 175px 168px 92px 22px 90px 1fr; align-items: center;
`;
const BoxRow = styled.div`display: flex; gap: 2.700px;`;
const SwBox = styled.span<{ $off?: boolean }>`
  width: 16px; height: 16px; flex: none; display: flex; align-items: center; justify-content: center; background: ${p => (p.$off ? 'transparent' : '#272727')};
`;
const LabelChip = styled.span<{ $c: string }>`width: 19px; height: 21px; background: ${p => p.$c}; display: block;`;
const Index = styled.span`font: 700 13px "Open Sans", sans-serif; color: #a8a8a8; padding-left: 8px;`;
const SourceCell = styled.div`display: flex; align-items: center; padding-left: 9px; gap: 11px;`;
const SourceIcon = styled.span`width: 14px; display: flex; justify-content: center; flex: none;`;
const Solid = styled.span`width: 21px; height: 21px; background: #000; flex: none; margin: 0 -3px 0 -3px;`;
const SourceName = styled.span`font: 700 13px ${MONO}; color: #a8a8a8;`;
const ModeSel = styled.span<{ $w: number; $ml?: number }>`
  width: ${p => p.$w}px; margin-left: ${p => p.$ml ?? 0}px; height: 21px; background: #1e1e1e; display: flex; align-items: center; justify-content: space-between; padding: 0 7px 0 8px; font-size: 14px; color: #a8a8a8; flex: none;
`;
const ParentCell = styled.div<{ $pl?: number }>`display: flex; align-items: center; padding-left: ${p => p.$pl ?? 8}px; gap: 6px;`;
const RotLabel = styled.span`font-size: 14px; color: #a8a8a8;`;
const SrcWatch = styled.div`display: flex; align-items: center; gap: 7px;`;
const RotVal = styled.span`font: 12.500px ${MONO}; color: ${BLUE}; white-space: nowrap; letter-spacing: -.2px;`;
const Mul = styled.span`color: #9a9a9a; margin: 0 2px;`;

const TimePane = styled.div`flex: 1; position: relative; overflow: hidden; padding-top: 42px; display: flex; flex-direction: column;`;
const NavBar = styled.div`height: 11px; display: flex; flex: none; background: #6a6a6a; margin-right: 2px;`;
const Handle = styled.span<{ $side: 'l' | 'r'; $h: number }>`
  width: 7px; height: ${p => p.$h}px; background: ${BLUE}; flex: none; margin-left: ${p => (p.$side === 'l' ? '1px' : 'auto')};
  border-radius: ${p => (p.$side === 'l' ? '5px 0 0 5px' : '0 5px 5px 0')};
`;
const Ruler = styled.div`height: 26px; flex: none; overflow: hidden; border-bottom: 2px solid #0c0c0c; background: #232323;`;
const RulerStrip = styled.div`display: flex; margin-left: -41px; width: 1100px; height: 100%;`;
const TickCell = styled.div`width: 100px; flex: none; display: flex; flex-direction: column; align-items: center; font: 12px/15px ${MONO}; letter-spacing: -.6px; color: #a4a4a4; padding-top: 3px;`;
const TickMark = styled.span`width: 1px; height: 6px; background: #888; display: block; margin-top: 1px;`;
const WorkArea = styled.div`height: 21px; flex: none; background: #626262; display: flex; align-items: center;`;
const Green = styled.div`height: 4px; flex: none; margin: 0 10px 0 8px; background: #10b424; border-top: 1px solid #063; border-bottom: 1px solid #083;`;
const TrackRow = styled.div`height: 25px; flex: none; padding: 1px 10px 2px 8px; background: #2e2e2e; border-bottom: 1px solid #222;`;
const TrackBar = styled.div<{ $c: string }>`height: 100%; background: ${p => p.$c}; border: 1px solid rgba(0,0,0,.12);`;
const TrackEmpty = styled.div`flex: 1; margin: 0 10px 0 8px; background: #383838;`;
const Marker = styled.div`position: absolute; left: 160px; top: 80px; width: 93px; height: 15px; background: #b2b2b2; font: 12.500px/16px ${MONO}; color: #111; padding-left: 8px; border-radius: 1px; white-space: nowrap;`;
const MarkerPin = styled.svg`position: absolute; left: 153px; top: 88px;`;
const PlayLine = styled.div`position: absolute; left: 88px; top: 60px; bottom: 0; width: 1px; background: ${BLUE};`;
const PlayHead = styled.svg`position: absolute; left: 82px; top: 60px;`;
const IBeam = styled.svg`position: absolute; left: 85px; top: 157px;`;
const NavTick = styled.span`position: absolute; left: 88px; top: 42px; width: 3px; height: 11px; background: #5c8fbf;`;

const ticks = ['17f', '27f', '37f', '47f', '57f', '07f', '17f', '27f', '37f', '47f', '57f'];

const TimelinePanel = () => (
  <Timeline>
    <LeftPane>
      <Tabs>
        <TabItem $w={113}><TabSwatch /><span>fin</span></TabItem>
        <TabItemNext $w={124}><TabSwatch /><span>03</span></TabItemNext>
        <ActiveTab><TabClose>×</TabClose><TabSwatch /><TabName>棋盘</TabName><Burger /></ActiveTab>
      </Tabs>
      <Controls>
        <TimeCol><BigTime>0:00:06:25</BigTime><Fps>00385 (60.00 fps)</Fps></TimeCol>
        <LayerSearch><SearchIcon /></LayerSearch>
        <CtlIcon $ml={20}><svg width="21" height="15" viewBox="0 0 21 15" fill="#aaa"><rect y="1" width="7" height="3" /><rect x="9" y="1" width="5" height="3" /><rect x="11" y="6" width="5" height="3" /><path d="M7 2.500h2M11 3v4M15 11h6l-3 3z" stroke="#aaa" /></svg></CtlIcon>
        <CtlIcon $ml={20}><svg width="22" height="20" viewBox="0 0 22 20" fill="none" stroke="#aaa"><path d="M13 9l7 3v6l-7 2-6-2v-6z" /><path d="M7 12l6 2 7-2M13 14v6" /><path d="M5 0l1 3 3-1-2 3 3 2-3 0 0 3-2-2-3 2 1-3-3-1 3-1z" fill="#ddd" stroke="none" /></svg></CtlIcon>
        <CtlIcon $ml={22}><svg width="21" height="16" viewBox="0 0 21 16" fill="#aaa"><path d="M4 7a6.500 6.500 0 0 1 13 0z" /><rect x="9" y="4" width="3" height="11" fill="#ddd" /><rect y="9" width="21" height="7" opacity=".8" /></svg></CtlIcon>
        <CtlIcon $ml={12}><svg width="19" height="19" viewBox="0 0 19 19"><path d="M0 4v15h15" stroke="#9a9a9a" fill="none" strokeWidth="1.500" /><rect x="3" y="0" width="16" height="15" fill="#aaa" /><rect x="7" y="3" width="8" height="9" fill="#333" /></svg></CtlIcon>
        <CtlIcon $ml={15}><svg width="18" height="18" viewBox="0 0 18 18" fill="none" stroke="#aaa"><circle cx="6" cy="12" r="5" /><circle cx="8" cy="10" r="5" fill="#262626" /><circle cx="11.500" cy="6.500" r="6" fill="#8f8f8f" /></svg></CtlIcon>
        <CtlIcon $ml={22}><svg width="21" height="20" viewBox="0 0 21 20" fill="none" stroke="#aaa"><rect x="1" y="3" width="19" height="16" /><path d="M2 7c6 0 6 8 11 8h5M5 0v3M10 0v3M15 0v3" /></svg></CtlIcon>
      </Controls>
      <LayerHead>
        <LHCell $w={84} $sep={false} $gap={4} $pl={7}><Eye /><Speaker /><Dot /><span /><Lock /></LHCell>
        <LHCell $w={41} $pl={16}><Tag c="#aaa" /></LHCell>
        <LHCell $w={40}><HashMark>#</HashMark></LHCell>
        <LHCell $w={167}>源名称</LHCell>
        <LHCell $w={170} $gap={4.500} $pl={4}>
          <Shy /><Sun /><Dots /><FxSmall>fx</FxSmall><Film /><Motion /><HalfCircle /><Cube />
        </LHCell>
        <LHCell $w={100}>模式</LHCell>
        <LHCell $w={108} $sep={false}><HashMark>T</HashMark><TrkLabel>TrkMat</TrkLabel></LHCell>
        <LHCell $w={146}>父级和链接</LHCell>
        <LHCell $w={20} />
      </LayerHead>
      <LayerRow>
        <BoxRow><SwBox /><SwBox $off /><SwBox $off /><SwBox /></BoxRow>
        <Twist><Chevron /></Twist>
        <LabelChip $c="#aaa9c9" />
        <Index>1</Index>
        <SourceCell><SourceIcon><PngIcon /></SourceIcon><SourceName>p-5.png</SourceName></SourceCell>
        <BoxRow><SwBox><Shy /></SwBox><SwBox $off /><SwBox><Slash /></SwBox><SwBox $off /><SwBox $off /><SwBox /><SwBox /><SwBox /></BoxRow>
        <ModeSel $w={86} $ml={2}>正常<Chevron dir="down" c="#aaa" /></ModeSel>
        <SwBox />
        <span />
        <ParentCell><Spiral /><ModeSel $w={111}>无<Chevron dir="down" c="#aaa" /></ModeSel></ParentCell>
      </LayerRow>
      <LayerRow>
        <BoxRow><SwBox><Eye /></SwBox><SwBox $off /><SwBox /><SwBox /></BoxRow>
        <Twist><Chevron dir="down" /></Twist>
        <LabelChip $c="#b03434" />
        <Index>2</Index>
        <SourceCell><SourceIcon><Solid /></SourceIcon><SourceName>棋盘</SourceName></SourceCell>
        <BoxRow><SwBox><Shy /></SwBox><SwBox /><SwBox><Slash /></SwBox><SwBox><FxSmall>fx</FxSmall></SwBox><SwBox $off /><SwBox /><SwBox /><SwBox /></BoxRow>
        <ModeSel $w={86} $ml={2}>正常<Chevron dir="down" c="#aaa" /></ModeSel>
        <SwBox />
        <ModeSel $w={81} $ml={4}>无<Chevron dir="down" c="#aaa" /></ModeSel>
        <ParentCell><Spiral /><ModeSel $w={111}>无<Chevron dir="down" c="#aaa" /></ModeSel></ParentCell>
      </LayerRow>
      <LayerRow $bg="#2a2a2a" $h={26}>
        <span /><span /><span /><span />
        <SrcWatch><Watch /><RotLabel>旋转</RotLabel></SrcWatch>
        <RotVal>0<Mul>x</Mul>+20.0<Mul>°</Mul></RotVal>
        <span /><span /><span />
        <ParentCell $pl={24}><Spiral /></ParentCell>
      </LayerRow>
    </LeftPane>
    <TimePane>
      <NavBar><Handle $side="l" $h={11} /><Handle $side="r" $h={11} /></NavBar>
      <Ruler>
        <RulerStrip>
          {ticks.map((t, i) => <TickCell key={i}>{t}<TickMark /></TickCell>)}
        </RulerStrip>
      </Ruler>
      <WorkArea><Handle $side="l" $h={20} /><Handle $side="r" $h={20} /></WorkArea>
      <Green />
      <TrackRow><TrackBar $c="#7a788a" /></TrackRow>
      <TrackRow><TrackBar $c="#7e3e3e" /></TrackRow>
      <TrackEmpty />
      <NavTick />
      <Marker>rotate end</Marker>
      <MarkerPin width="14" height="11" viewBox="0 0 14 11"><path d="M0 5l7-5 7 5v6H0z" fill="#b2b2b2" stroke="#222" /></MarkerPin>
      <PlayLine />
      <PlayHead width="14" height="16" viewBox="0 0 14 16"><path d="M0 0h14v8l-7 8-7-8z" fill={BLUE} /><path d="M5 8h4M7 8v5" stroke="#123" /></PlayHead>
      <IBeam width="8" height="15" viewBox="0 0 8 15" fill="none" stroke="#a8b4c0"><path d="M0 .5h8M0 14.500h8M3 .5v14M5 .5v14" /></IBeam>
    </TimePane>
  </Timeline>
);

export default function App() {
  return (
    <>
      <Global />
      <Page>
        <TopArea>
          <Project />
          <Preset />
          <Viewer />
          <Effect />
          <Right />
        </TopArea>
        <TimelinePanel />
      </Page>
    </>
  );
}
